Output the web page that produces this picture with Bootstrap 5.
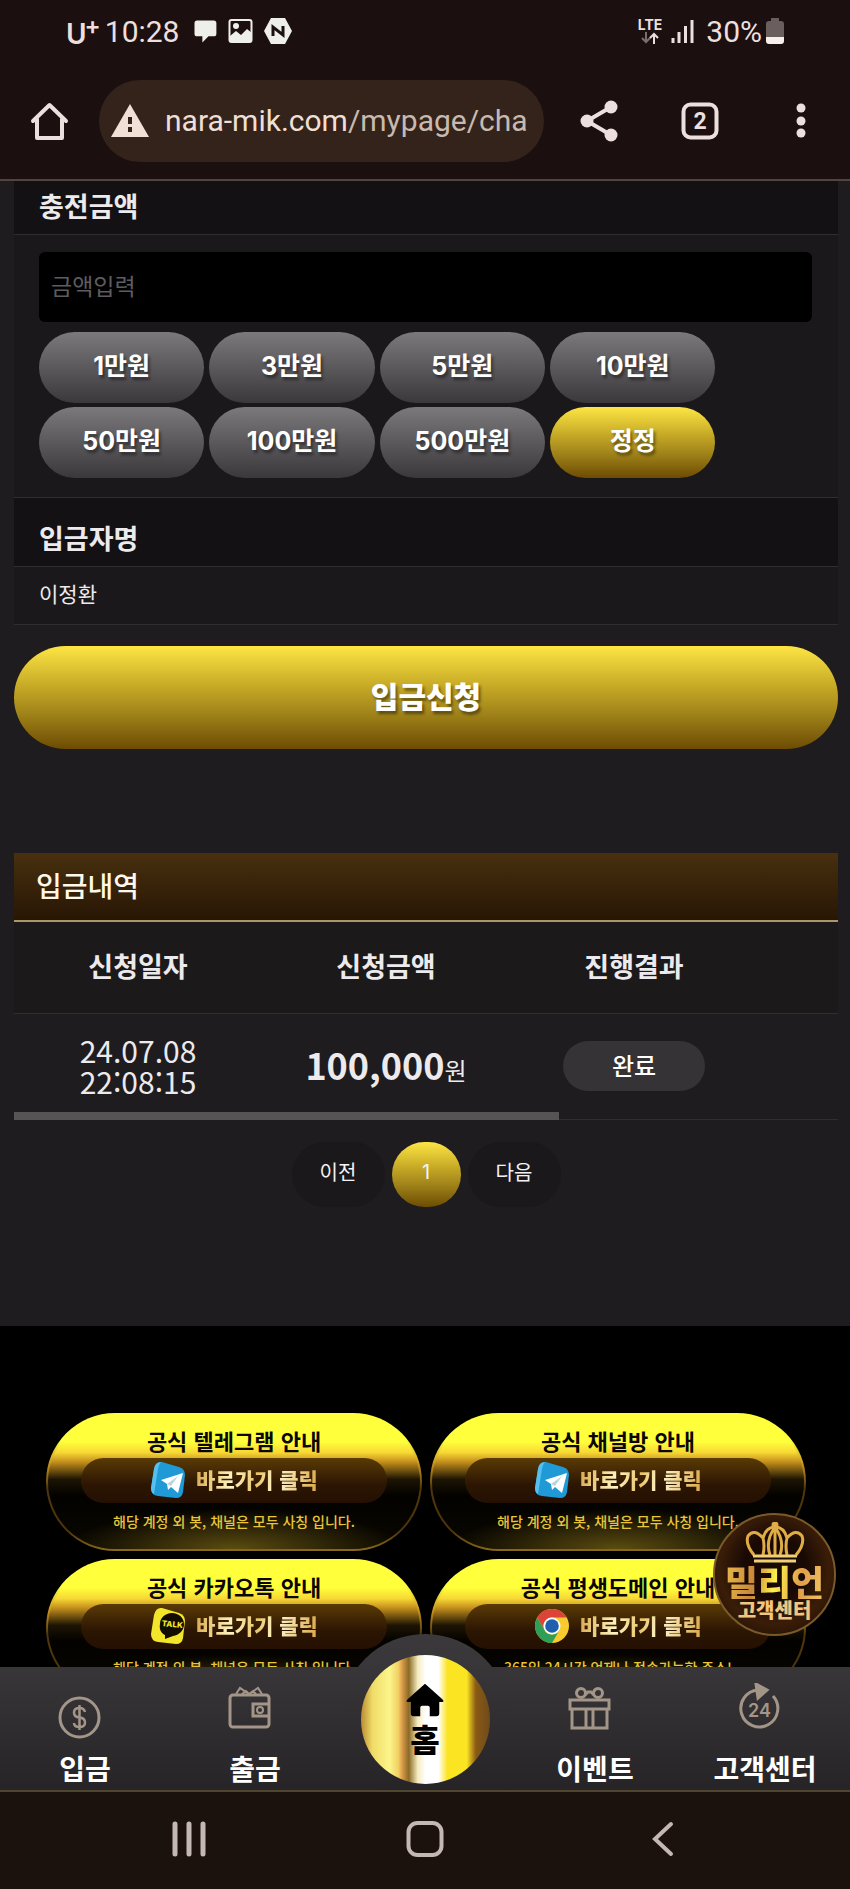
<!DOCTYPE html>
<html lang="ko">
<head>
<meta charset="utf-8">
<meta name="viewport" content="width=device-width, initial-scale=1">
<title>충전신청</title>
<link href="https://cdn.jsdelivr.net/npm/bootstrap@5.3.0/dist/css/bootstrap.min.css" rel="stylesheet">
<style>
  :root { --ui: "Noto Sans CJK KR", "Noto Sans", sans-serif; --line: #302e31; --gold: linear-gradient(#fde544, #c5a825 40%, #a1841a 65%, #6d4c03); }
  body { height: 100vh; background: #1e1c1e; color: #eceaec; font-family: var(--ui); font-size: 20px; line-height: 1.5; overflow: hidden; }
  button, .plain-link { color: inherit; text-decoration: none; }
  .icon-btn { background: none; border: 0; padding: 0; line-height: 0; color: #ecdfdd; }
  svg { display: block; flex: none; }

  /* phone chrome */
  .device-top { background: #1b100f; color: #ecdfdd; font-family: Roboto, sans-serif; border-bottom: 2px solid #51453f; }
  .status-row { height: 62px; padding: 0 66px; font-size: 30px; }
  .carrier { font-family: Inter, sans-serif; font-weight: 600; font-size: 28px; padding-top: 6px; }
  .carrier sup { font-size: 24px; top: -10px; margin-left: -2px; }
  .lte { font: 700 14px/14px Inter, sans-serif; }
  .tool-row { height: 117px; padding: 0 30px; }
  .address { height: 82px; margin: 0 36px 0 30px; padding: 0 12px; background: #33231b; border: 0; border-radius: 41px; font-size: 30px; color: #efdfd4; white-space: nowrap; overflow: hidden; }
  .address .path { color: #c9bab0; }
  .tool-group { gap: 63px; }

  /* deposit form */
  .page-body { min-height: 0; overflow: hidden; }
  .sheet { padding: 0 12px 0 14px; }
  .row-title { background: #131113; border-bottom: 1px solid var(--line); height: 69px; padding: 12px 25px 0; font-size: 27px; font-weight: 700; margin: 0; display: flex; align-items: center; }
  .row-title.cut { height: 54px; padding: 0 25px 2px; }
  .row-fill { background: #1a181b; border-bottom: 1px solid var(--line); }
  .amount-row { padding: 17px 26px 19px 25px; }
  .amount-input, .amount-input:focus { height: 70px; background: #000; border: 0; border-radius: 6px; color: #eee; font-size: 23px; padding: 0 12px 4px; box-shadow: none; }
  .amount-input::placeholder { color: #5e5c5f; opacity: 1; }
  .amount-grid { display: grid; grid-template-columns: repeat(4, 1fr); gap: 4px 5px; width: 87.5%; margin-top: 10px; }
  .pill-btn { height: 71px; border: 0; border-radius: 36px; color: #fff; font: 700 25px/1 Inter, var(--ui); background: linear-gradient(#7b797c, #3a383b); text-shadow: 2px 3px 3px rgba(0,0,0,.45); padding: 0 0 2px; }
  .pill-btn.gold { background: var(--gold); }
  .name-row { height: 58px; padding: 0 25px 4px; font-size: 21px; }
  .submit-btn { height: 103px; margin-top: 21px; border: 0; border-radius: 52px; background: var(--gold); color: #fff; font-size: 30px; font-weight: 900; padding: 0 0 5px; text-shadow: 2px 3px 3px rgba(0,0,0,.45); }

  /* history */
  .history { margin-top: 104px; }
  .history-title { height: 69px; margin: 0; padding: 0 22px 2px; font-size: 28px; font-weight: 500; color: #fff8e8; background: linear-gradient(#48300f, #281604); border-bottom: 2px solid #ab9668; display: flex; align-items: center; }
  .history-table { width: 100%; table-layout: fixed; text-align: center; }
  .history-table .data-col { width: 30.1%; }
  .history-table th { height: 91px; padding-bottom: 4px; background: #1b191a; border-bottom: 1px solid var(--line); font-size: 27px; }
  .history-table td { height: 106px; padding-bottom: 2px; border-bottom: 1px solid var(--line); }
  .stamp { font-size: 30px; line-height: 31px; }
  .sum { font-size: 36px; font-weight: 700; line-height: 40px; }
  .unit { font-size: 24px; }
  .state-pill { display: inline-flex; align-items: center; justify-content: center; width: 58%; height: 50px; padding-bottom: 2px; border-radius: 25px; background: #353335; color: #fff; font-size: 24px; font-weight: 500; }
  .scroll-thumb { position: absolute; left: 0; bottom: 0; width: 66.2%; height: 8px; background: #565455; }
  .pager { gap: 7px; padding: 22px 0 119px; }
  .pager button { width: 93px; height: 65px; border: 0; border-radius: 33px; background: #1a181a; color: #f4f2f4; padding: 0 0 4px; font-size: 20px; }
  .pager button.now { width: 69px; background: var(--gold); font-family: Inter, sans-serif; }

  /* channel banners */
  .channels { background: #000; padding: 87px 44px 400px 46px; }
  .channel-grid { display: grid; grid-template-columns: 1fr 1fr; gap: 8px; }
  .channel { display: block; height: 138px; padding: 9px 33px 0; border: 2px solid transparent; border-radius: 69px; text-align: center; color: #0b0700; white-space: nowrap; background: radial-gradient(ellipse 45% 30% at 50% 100%, #5b4c10, transparent) padding-box, linear-gradient(#ffff3c 0 20%, #f7d834 28%, #c48f1c 35%, #1d1403 48%, #030200 60%, #0a0700) padding-box, linear-gradient(#ffff3c 20%, #c48f1c 38%, #4e350c 55%, #4e350c 85%, #8a6a1c) border-box; }
  .channel-name { font-size: 22px; line-height: 32px; margin-bottom: 2px; font-weight: 700; }
  .channel-go { height: 45px; border-radius: 23px; background: linear-gradient(#5a3b05, #2c1503 60%, #241002); gap: 10px; font-size: 21px; font-weight: 900; }
  .gold-text { background: linear-gradient(100deg, #d8a848, #fff3c0 30%, #e8c468 50%, #fff6d0 65%, #d9a53f); -webkit-background-clip: text; background-clip: text; color: transparent; }
  .channel-note { color: #e9c53a; font-size: 14px; line-height: 37px; font-weight: 500; }

  /* floating help button */
  .help-float { position: absolute; right: 14px; bottom: 253px; width: 123px; height: 123px; padding: 7px 0 0; border: 2px solid #7a5a2c; border-radius: 50%; background: radial-gradient(circle at 50% 45%, #180904 35%, #3a1d08 62%, #120702); text-align: center; z-index: 3; display: flex; flex-direction: column; align-items: center; }
  .help-brand { font-size: 36px; line-height: 35px; font-weight: 900; background: linear-gradient(100deg, #e8b94a, #c8873a 30%, #fff04c 50%, #e09d4a 75%, #f1c565); -webkit-background-clip: text; background-clip: text; color: transparent; }
  .help-sub { font-size: 20px; line-height: 22px; font-weight: 900; color: #f0c680; }

  /* bottom bars */
  .tab-bar { position: relative; height: 125px; background: linear-gradient(#383638, #262426); border-bottom: 2px solid #50462f; display: grid; grid-template-columns: repeat(5, 1fr); }
  .tab-link { display: flex; flex-direction: column; align-items: center; justify-content: flex-end; color: #fff; text-decoration: none; font-size: 28px; line-height: 42px; padding-bottom: 1px; font-weight: 700; white-space: nowrap; z-index: 2; }
  .tab-link svg { margin: 0 11px 13px 0; }
  .tab-link svg.low { margin-bottom: 8px; }
  .home-disc { position: absolute; left: 50%; bottom: -14px; width: 170px; height: 170px; margin-left: -85px; border-radius: 50%; background: linear-gradient(#3b393c, #383638 19%, #262426 91%); clip-path: inset(0 0 14px 0); display: flex; align-items: center; justify-content: center; text-decoration: none; }
  .home-core { width: 129px; height: 129px; border-radius: 50%; color: #000; font-size: 32px; line-height: 36px; font-weight: 900; background: linear-gradient(90deg, #b98a34, #f0dc68 9%, #fbf58a 22%, #f3cf62 29%, #d99a4a 32%, #8a6a26 37%, #f5ecc0 44%, #fff 50% 60%, #fbe422 67% 82%, #8a5a14 89%, #6e4a1c); }
  .home-core svg { margin-bottom: 3px; }
  .system-bar { height: 97px; background: #1b110d; padding: 0 20% 4px; }
  .system-bar .icon-btn { color: #c4b8b4; width: 38px; }
</style>
</head>
<body class="d-flex flex-column m-0">

<header class="device-top flex-shrink-0">
  <div class="status-row d-flex align-items-center">
    <span class="carrier">U<sup>+</sup></span>
    <span class="ms-1">10:28</span>
    <svg class="ms-2 ps-1" width="32" height="28" viewBox="-2 0 32 28"><path fill="#efefea" d="M5 2h19q3 0 3 3v12q0 3-3 3h-6l-7 7v-7H5q-3 0-3-3V5q0-3 3-3z"/></svg>
    <svg class="ms-2" width="28" height="28" viewBox="0 0 28 28"><rect x="2.500" y="3" width="22" height="22" rx="2" fill="none" stroke="#efefea" stroke-width="2"/><circle cx="9" cy="9" r="3" fill="#efefea"/><path fill="#efefea" d="M3 19l6-5 5 4 6-6 5 4v9H3z"/></svg>
    <svg class="ms-2" width="30" height="28" viewBox="0 0 30 28"><path fill="#efefea" d="M8 1h14l7 13-7 13H8L1 14z"/><path d="M10 19v-9l10 8V9" fill="none" stroke="#1b100f" stroke-width="3"/></svg>
    <span class="ms-auto lte text-center">LTE<svg class="mx-auto" width="20" height="12" viewBox="0 0 20 12"><path d="M6 0v10M2 6l4 4 4-4" fill="none" stroke="#7a6f6d" stroke-width="2"/><path d="M14 12V2M10 6l4-4 4 4" fill="none" stroke="#ecdfdd" stroke-width="2"/></svg></span>
    <svg class="ms-2" width="24" height="26" viewBox="0 0 24 26" stroke="#ecdfdd" stroke-width="3"><path d="M3 25v-5M9 25V14M15.500 25V8M22 25V2"/></svg>
    <span class="ms-2 ps-1">30%</span>
    <svg class="ms-1" width="18" height="26" viewBox="0 0 18 26"><path fill="#6b5f5d" d="M5 3V0h8v3h2q3 0 3 3v13H0V6q0-3 3-3z"/><path fill="#f5f0ee" d="M0 19h18v4q0 3-3 3H3q-3 0-3-3z"/></svg>
  </div>
  <div class="tool-row d-flex align-items-center">
    <button class="icon-btn" aria-label="홈"><svg width="39" height="40" viewBox="0 0 39 40" fill="none" stroke="currentColor" stroke-width="4" stroke-linejoin="round" stroke-linecap="round"><path d="M3 20L19.500 4 36 20M7 18v19h25V18"/></svg></button>
    <button class="address d-flex align-items-center flex-fill text-start">
      <svg class="me-3" width="38" height="33" viewBox="0 0 38 33"><path fill="#f1e0d5" d="M19 0l19 33H0z"/><path d="M19 13v7M19 23v5" stroke="#33231b" stroke-width="4"/></svg>
      <span>nara-mik.com<span class="path">/mypage/cha</span></span>
    </button>
    <div class="tool-group d-flex">
      <button class="icon-btn" aria-label="공유"><svg width="38" height="42" viewBox="0 0 38 42"><path d="M31 7L7 21l24 14" fill="none" stroke="currentColor" stroke-width="4"/><g fill="currentColor"><circle cx="31" cy="7" r="6.500"/><circle cx="7" cy="21" r="6.500"/><circle cx="31" cy="35" r="6.500"/></g></svg></button>
      <button class="icon-btn" aria-label="탭"><svg width="38" height="42" viewBox="0 0 38 42"><rect x="2.500" y="4.500" width="33" height="33" rx="7" fill="none" stroke="currentColor" stroke-width="4"/><text x="19" y="29" text-anchor="middle" font-family="Roboto" font-size="23" font-weight="700" fill="currentColor">2</text></svg></button>
      <button class="icon-btn" aria-label="메뉴"><svg width="38" height="42" viewBox="0 0 38 42" fill="currentColor"><circle cx="19" cy="8" r="4.500"/><circle cx="19" cy="21" r="4.500"/><circle cx="19" cy="33" r="4.500"/></svg></button>
    </div>
  </div>
</header>

<main class="page-body flex-fill">
  <div class="sheet">
    <form onsubmit="return false">
      <label class="row-title cut" for="amount">충전금액</label>
      <div class="row-fill amount-row">
        <input id="amount" class="form-control amount-input" type="text" placeholder="금액입력">
        <div class="amount-grid">
          <button type="button" class="pill-btn">1만원</button>
          <button type="button" class="pill-btn">3만원</button>
          <button type="button" class="pill-btn">5만원</button>
          <button type="button" class="pill-btn">10만원</button>
          <button type="button" class="pill-btn">50만원</button>
          <button type="button" class="pill-btn">100만원</button>
          <button type="button" class="pill-btn">500만원</button>
          <button type="button" class="pill-btn gold">정정</button>
        </div>
      </div>
      <h2 class="row-title">입금자명</h2>
      <div class="row-fill name-row d-flex align-items-center">이정환</div>
      <button type="submit" class="submit-btn w-100">입금신청</button>
    </form>

    <section class="history">
      <h2 class="history-title">입금내역</h2>
      <div class="position-relative">
        <table class="history-table">
          <colgroup><col class="data-col"><col class="data-col"><col class="data-col"><col></colgroup>
          <thead><tr><th>신청일자</th><th>신청금액</th><th>진행결과</th><th></th></tr></thead>
          <tbody><tr>
            <td class="stamp">24.07.08<br>22:08:15</td>
            <td><span class="sum">100,000</span><span class="unit">원</span></td>
            <td><span class="state-pill">완료</span></td>
            <td></td>
          </tr></tbody>
        </table>
        <div class="scroll-thumb"></div>
      </div>
      <nav class="pager d-flex justify-content-center" aria-label="페이지">
        <button type="button">이전</button>
        <button type="button" class="now">1</button>
        <button type="button">다음</button>
      </nav>
    </section>
  </div>

  <section class="channels">
    <div class="channel-grid">
      <a class="channel plain-link" href="#">
        <div class="channel-name">공식 텔레그램 안내</div>
        <div class="channel-go d-flex align-items-center justify-content-center">
          <svg width="36" height="38" viewBox="0 0 36 38"><path fill="#1f9ad6" d="M12 1l17 5q6 2 6 8l-2 17q-1 6-7 6L8 35q-7-1-7-8L4 8q2-8 8-7z"/><path fill="#55c0ee" d="M11 1q-6 0-7 7L1 27q0 5 3 6L8 8q1-5 3-7z"/><path fill="#fff" d="M11 19l22-7-5 20-7-6-3 3-1-6z"/><path d="M17 23l11-8-7 10" fill="#b9d4e4"/></svg>
          <span class="gold-text">바로가기 클릭</span>
        </div>
        <div class="channel-note">해당 계정 외 봇, 채널은 모두 사칭 입니다.</div>
      </a>
      <a class="channel plain-link" href="#">
        <div class="channel-name">공식 채널방 안내</div>
        <div class="channel-go d-flex align-items-center justify-content-center">
          <svg width="36" height="38" viewBox="0 0 36 38"><path fill="#1f9ad6" d="M12 1l17 5q6 2 6 8l-2 17q-1 6-7 6L8 35q-7-1-7-8L4 8q2-8 8-7z"/><path fill="#55c0ee" d="M11 1q-6 0-7 7L1 27q0 5 3 6L8 8q1-5 3-7z"/><path fill="#fff" d="M11 19l22-7-5 20-7-6-3 3-1-6z"/><path d="M17 23l11-8-7 10" fill="#b9d4e4"/></svg>
          <span class="gold-text">바로가기 클릭</span>
        </div>
        <div class="channel-note">해당 계정 외 봇, 채널은 모두 사칭 입니다.</div>
      </a>
      <a class="channel plain-link" href="#">
        <div class="channel-name">공식 카카오톡 안내</div>
        <div class="channel-go d-flex align-items-center justify-content-center">
          <svg width="36" height="38" viewBox="0 0 36 38"><path fill="#f3e62a" d="M12 1l17 5q6 2 6 8l-2 17q-1 6-7 6L8 35q-7-1-7-8L4 8q2-8 8-7z"/><path fill="#120d00" d="M22 6c7 0 12 5 12 11 0 7-5 11-11 12l-8 3v-4c-4-2-6-6-5-11 0-6 5-11 12-11z"/><text x="22" y="20" text-anchor="middle" transform="rotate(6 22 20)" font-family="Inter" font-size="8" font-weight="800" fill="#f3e62a">TALK</text></svg>
          <span class="gold-text">바로가기 클릭</span>
        </div>
        <div class="channel-note">해당 계정 외 봇, 채널은 모두 사칭 입니다.</div>
      </a>
      <a class="channel plain-link" href="#">
        <div class="channel-name">공식 평생도메인 안내</div>
        <div class="channel-go d-flex align-items-center justify-content-center">
          <svg width="36" height="36" viewBox="0 0 36 36"><circle cx="18" cy="18" r="17" fill="#f7cb2d"/><path fill="#dd4437" d="M3.300 9.500A17 17 0 0 1 32.700 9.500H18a8.500 8.500 0 0 0-7.400 12.700z"/><path fill="#2f9e56" d="M3.300 9.500a17 17 0 0 0 14.700 25.500l7.400-12.700a8.500 8.500 0 0 1-14.800 0z"/><circle cx="18" cy="18" r="8.500" fill="#fff"/><circle cx="18" cy="18" r="6.800" fill="#1f5fae"/></svg>
          <span class="gold-text">바로가기 클릭</span>
        </div>
        <div class="channel-note">365일 24시간 언제나 접속가능한 주소!</div>
      </a>
    </div>
  </section>
</main>

<footer class="position-relative flex-shrink-0">
  <nav class="tab-bar">
    <a class="home-disc" href="#">
      <span class="home-core d-flex flex-column align-items-center justify-content-center">
        <svg width="38" height="34" viewBox="0 0 40 34"><path d="M20 0l18 16q3 3 0 3h-3v12q0 3-3 3h-7V25q0-2-2-2h-6q-2 0-2 2v9H8q-3 0-3-3V19H2q-3 0 0-3z"/></svg>
        홈
      </span>
    </a>
    <a class="tab-link" href="#">
      <svg class="low" width="43" height="43" viewBox="0 0 43 43"><circle cx="21.500" cy="21.500" r="19.500" fill="none" stroke="#a39688" stroke-width="3"/><path d="M27 16q-1-4-5.500-4-5.500 0-5.500 4.500t5.500 5 5.500 5-5.500 4.500-5.500-4M21.500 9v25" fill="none" stroke="#a39688" stroke-width="2.500"/></svg>입금</a>
    <a class="tab-link" href="#">
      <svg width="43" height="49" viewBox="0 0 43 49" fill="none" stroke="#a39688" stroke-width="3"><rect x="2" y="10" width="39" height="32" rx="3"/><path d="M8 9l4-6 9 6 9-6 4 6M14 9l4-3 3 3 4-3 3 3" stroke-width="2"/><path d="M41 19H25v12h16"/><circle cx="32" cy="25" r="3" stroke-width="2"/></svg>출금</a>
    <span></span>
    <a class="tab-link" href="#">
      <svg width="43" height="49" viewBox="0 0 43 49" fill="none" stroke="#a39688" stroke-width="3"><rect x="2" y="15" width="39" height="9"/><path d="M4 24v19h35V24M18 24v19M25 24v19"/><circle cx="13" cy="8" r="4.500"/><circle cx="30" cy="8" r="4.500"/><path d="M17 10l3-3h3l3 3"/></svg>이벤트</a>
    <a class="tab-link" href="#">
      <svg width="43" height="51" viewBox="0 0 43 51" fill="none" stroke="#a39688" stroke-width="3"><path d="M35 13a18.500 18.500 0 1 1-15-6"/><path d="M18 1l11 6-9 8z" fill="#a39688"/><text x="21.500" y="34" text-anchor="middle" font-family="Inter" font-size="18" font-weight="600" fill="#a39688" stroke="none">24</text></svg>고객센터</a>
  </nav>
  <button class="help-float icon-btn" aria-label="밀리언 고객센터">
    <svg width="60" height="42" viewBox="0 0 60 42" fill="none" stroke="#e0ac45" stroke-width="3"><path d="M9 33Q0 22 3 14 9 6 18 16q2 8 0 17M18 16Q21 5 30 5t12 11M30 5v28M42 16q9-10 15-2 3 8-6 19M42 16q-2 8 0 17M30 5q-10 14-5 28M30 5q10 14 5 28"/><path d="M8 34h44M9 39h42" stroke="#f1cf77" stroke-width="3"/><circle cx="30" cy="3" r="2" fill="#f1cf77"/></svg>
    <span class="help-brand">밀리언</span>
    <span class="help-sub">고객센터</span>
  </button>
  <nav class="system-bar d-flex align-items-center justify-content-between">
    <button class="icon-btn" aria-label="최근 앱"><svg width="38" height="36" viewBox="0 0 38 36" stroke="currentColor" stroke-width="5" stroke-linecap="round"><path d="M5 3v30M19 3v30M33 3v30"/></svg></button>
    <button class="icon-btn" aria-label="홈 화면"><svg width="38" height="36" viewBox="0 0 38 36"><rect x="2.500" y="2" width="33" height="32" rx="9" fill="none" stroke="currentColor" stroke-width="4"/></svg></button>
    <button class="icon-btn" aria-label="뒤로"><svg width="38" height="36" viewBox="0 0 38 36"><path d="M29 3L13 18l16 15" fill="none" stroke="currentColor" stroke-width="4" stroke-linecap="round"/></svg></button>
  </nav>
</footer>

<script src="https://cdn.jsdelivr.net/npm/bootstrap@5.3.0/dist/js/bootstrap.bundle.min.js"></script>
</body>
</html>
